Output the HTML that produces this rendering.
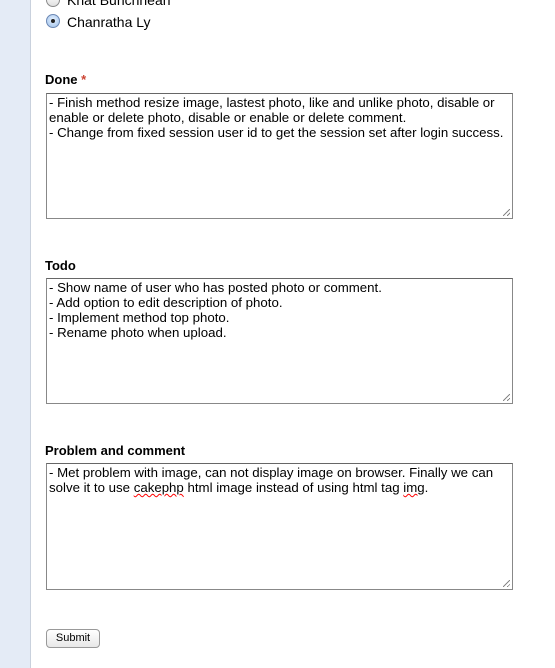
<!DOCTYPE html>
<html><head><style>
body{margin:0;width:555px;height:668px;overflow:hidden;background:#fff;font-family:"Liberation Sans",Arial,sans-serif;font-size:13px;color:#000;position:relative}
.side{position:absolute;left:0;top:0;width:30px;height:668px;background:#e4ebf6;border-right:1px solid #c9d1dd}
.abs{position:absolute}
.radio{position:absolute;width:12px;height:12px;border-radius:50%;border:1px solid #8a8a8a;background:linear-gradient(#fff,#e0e0e0)}
.lbl{position:absolute;left:45px;font-weight:bold;font-size:13px}
.ta{position:absolute;left:46px;border:1px solid #888;border-top-color:#666;padding:1px 2px;line-height:15px;font-size:13.25px;box-sizing:border-box;width:467px}
.grip{position:absolute;right:2px;bottom:2px;width:7px;height:7px;background:linear-gradient(135deg,transparent 45%,#888 45%,#888 55%,transparent 55%,transparent 75%,#888 75%,#888 85%,transparent 85%)}
.btn{position:absolute;left:46px;top:629px;width:52px;height:17px;border:1px solid #999;border-radius:4px;background:linear-gradient(#fff,#e8e8e8);font-size:11px;text-align:center;line-height:17px}
u{text-decoration:underline wavy red;text-decoration-thickness:1px}
</style></head><body>
<div class="side"></div>
<div class="radio" style="left:46px;top:-7px"></div>
<div class="abs" style="left:67px;top:-8px;font-size:14px">Khat Bunchhean</div>
<div class="radio" style="left:46px;top:14px;border-color:#6c88b4;background:radial-gradient(circle at 50% 40%,#e6f1ff,#9cc0ea)"><div style="position:absolute;left:4px;top:4px;width:4px;height:4px;border-radius:50%;background:#222"></div></div>
<div class="abs" style="left:67px;top:14px;font-size:14px">Chanratha Ly</div>

<div class="lbl" style="top:72px">Done <span style="color:#c43">*</span></div>
<div class="ta" style="top:93px;height:126px">- Finish method resize image, lastest photo, like and unlike photo, disable or enable or delete photo, disable or enable or delete comment.<br>- Change from fixed session user id to get the session set after login success.<div class="grip"></div></div>

<div class="lbl" style="top:258px">Todo</div>
<div class="ta" style="top:278px;height:126px">- Show name of user who has posted photo or comment.<br>- Add option to edit description of photo.<br>- Implement method top photo.<br>- Rename photo when upload.<div class="grip"></div></div>

<div class="lbl" style="top:443px">Problem and comment</div>
<div class="ta" style="top:463px;height:127px">- Met problem with image, can not display image on browser. Finally we can solve it to use <u>cakephp</u> html image instead of using html tag <u>img</u>.<div class="grip"></div></div>

<div class="btn">Submit</div>
</body></html>
